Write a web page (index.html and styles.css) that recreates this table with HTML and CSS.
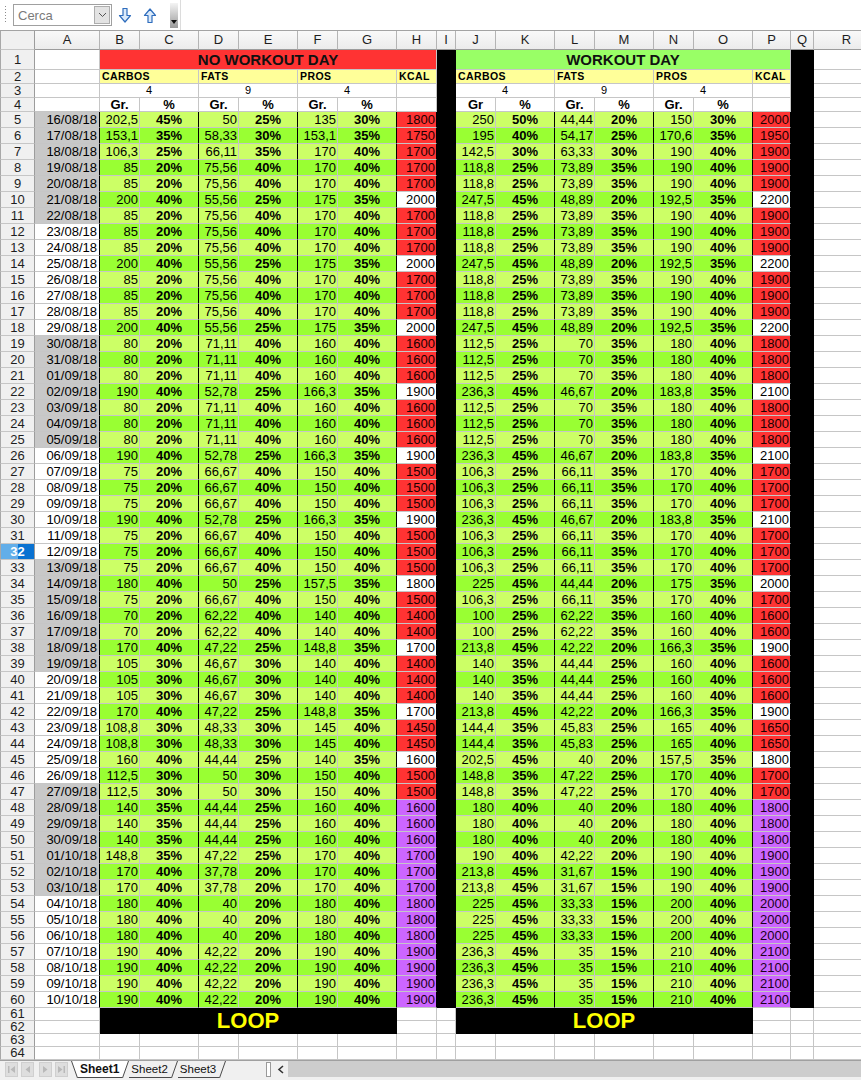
FILE: index.html
```html
<!DOCTYPE html>
<html lang="it">
<head>
<meta charset="utf-8">
<title>Sheet1</title>
<link rel="stylesheet" href="styles.css">
</head>
<body>
<div class="toolbar">
  <div class="tbgroup">
    <span class="grip"></span>
    <div class="search">
      <span class="ph">Cerca</span>
      <span class="ddbtn"><svg width="9" height="6" viewBox="0 0 9 6"><path d="M1 1 L4.5 4.5 L8 1" fill="none" stroke="#555" stroke-width="1"/></svg></span>
    </div>
    <svg class="arr" width="14" height="15" viewBox="0 0 14 15"><path d="M5 0.5 H9 V7.5 H12.5 L7 14 L1.5 7.5 H5 Z" fill="#dbeafa" stroke="#2f6dbd" stroke-width="1.2" stroke-linejoin="round"/></svg>
    <svg class="arr arr2" width="14" height="15" viewBox="0 0 14 15"><path d="M5 14.5 H9 V7.5 H12.5 L7 1 L1.5 7.5 H5 Z" fill="#dbeafa" stroke="#2f6dbd" stroke-width="1.2" stroke-linejoin="round"/></svg>
    <span class="more"><svg width="6" height="4" viewBox="0 0 6 4"><path d="M0 0 H6 L3 4 Z" fill="#111"/></svg></span>
  </div>
</div>
<div class="gridwrap">
<table class="sheet">
<colgroup>
<col class="w35"><col class="w65"><col class="w40"><col class="w59"><col class="w40"><col class="w59"><col class="w40"><col class="w59"><col class="w40"><col class="w19"><col class="w40"><col class="w59"><col class="w40"><col class="w59"><col class="w40"><col class="w59"><col class="w38"><col class="w23"><col class="w66">
</colgroup>
<tr class="ch"><th class="corner"></th><th>A</th><th>B</th><th>C</th><th>D</th><th>E</th><th>F</th><th>G</th><th>H</th><th>I</th><th>J</th><th>K</th><th>L</th><th>M</th><th>N</th><th>O</th><th>P</th><th>Q</th><th>R</th></tr>
<tr class="h1"><th>1</th><td></td><td colspan="7" class="title red">NO WORKOUT DAY</td><td class="blk"></td><td colspan="7" class="title grn">WORKOUT DAY</td><td class="blk"></td><td></td></tr>
<tr class="h2"><th>2</th><td></td><td colspan="2" class="yl">CARBOS</td><td colspan="2" class="yl">FATS</td><td colspan="2" class="yl">PROS</td><td class="yl">KCAL</td><td class="blk"></td><td colspan="2" class="yl">CARBOS</td><td colspan="2" class="yl">FATS</td><td colspan="2" class="yl">PROS</td><td class="yl">KCAL</td><td class="blk"></td><td></td></tr>
<tr class="h3"><th>3</th><td></td><td colspan="2" class="fac">4</td><td colspan="2" class="fac">9</td><td colspan="2" class="fac">4</td><td></td><td class="blk"></td><td colspan="2" class="fac">4</td><td colspan="2" class="fac">9</td><td colspan="2" class="fac">4</td><td></td><td class="blk"></td><td></td></tr>
<tr class="h4"><th>4</th><td></td><td class="gr">Gr.</td><td class="gr">%</td><td class="gr">Gr.</td><td class="gr">%</td><td class="gr">Gr.</td><td class="gr">%</td><td></td><td class="blk"></td><td class="gr">Gr</td><td class="gr">%</td><td class="gr">Gr.</td><td class="gr">%</td><td class="gr">Gr.</td><td class="gr">%</td><td></td><td class="blk"></td><td></td></tr>
<tr class="r l g"><th>5</th><td>16/08/18</td><td>202,5</td><td>45%</td><td>50</td><td>25%</td><td>135</td><td>30%</td><td>1800</td><td></td><td>250</td><td>50%</td><td>44,44</td><td>20%</td><td>150</td><td>30%</td><td>2000</td><td></td><td></td></tr>
<tr class="r b g"><th>6</th><td>17/08/18</td><td>153,1</td><td>35%</td><td>58,33</td><td>30%</td><td>153,1</td><td>35%</td><td>1750</td><td></td><td>195</td><td>40%</td><td>54,17</td><td>25%</td><td>170,6</td><td>35%</td><td>1950</td><td></td><td></td></tr>
<tr class="r l g"><th>7</th><td>18/08/18</td><td>106,3</td><td>25%</td><td>66,11</td><td>35%</td><td>170</td><td>40%</td><td>1700</td><td></td><td>142,5</td><td>30%</td><td>63,33</td><td>30%</td><td>190</td><td>40%</td><td>1900</td><td></td><td></td></tr>
<tr class="r b g"><th>8</th><td>19/08/18</td><td>85</td><td>20%</td><td>75,56</td><td>40%</td><td>170</td><td>40%</td><td>1700</td><td></td><td>118,8</td><td>25%</td><td>73,89</td><td>35%</td><td>190</td><td>40%</td><td>1900</td><td></td><td></td></tr>
<tr class="r l g"><th>9</th><td>20/08/18</td><td>85</td><td>20%</td><td>75,56</td><td>40%</td><td>170</td><td>40%</td><td>1700</td><td></td><td>118,8</td><td>25%</td><td>73,89</td><td>35%</td><td>190</td><td>40%</td><td>1900</td><td></td><td></td></tr>
<tr class="r b g w"><th>10</th><td>21/08/18</td><td>200</td><td>40%</td><td>55,56</td><td>25%</td><td>175</td><td>35%</td><td>2000</td><td></td><td>247,5</td><td>45%</td><td>48,89</td><td>20%</td><td>192,5</td><td>35%</td><td>2200</td><td></td><td></td></tr>
<tr class="r l g"><th>11</th><td>22/08/18</td><td>85</td><td>20%</td><td>75,56</td><td>40%</td><td>170</td><td>40%</td><td>1700</td><td></td><td>118,8</td><td>25%</td><td>73,89</td><td>35%</td><td>190</td><td>40%</td><td>1900</td><td></td><td></td></tr>
<tr class="r b"><th>12</th><td>23/08/18</td><td>85</td><td>20%</td><td>75,56</td><td>40%</td><td>170</td><td>40%</td><td>1700</td><td></td><td>118,8</td><td>25%</td><td>73,89</td><td>35%</td><td>190</td><td>40%</td><td>1900</td><td></td><td></td></tr>
<tr class="r l"><th>13</th><td>24/08/18</td><td>85</td><td>20%</td><td>75,56</td><td>40%</td><td>170</td><td>40%</td><td>1700</td><td></td><td>118,8</td><td>25%</td><td>73,89</td><td>35%</td><td>190</td><td>40%</td><td>1900</td><td></td><td></td></tr>
<tr class="r b w"><th>14</th><td>25/08/18</td><td>200</td><td>40%</td><td>55,56</td><td>25%</td><td>175</td><td>35%</td><td>2000</td><td></td><td>247,5</td><td>45%</td><td>48,89</td><td>20%</td><td>192,5</td><td>35%</td><td>2200</td><td></td><td></td></tr>
<tr class="r l"><th>15</th><td>26/08/18</td><td>85</td><td>20%</td><td>75,56</td><td>40%</td><td>170</td><td>40%</td><td>1700</td><td></td><td>118,8</td><td>25%</td><td>73,89</td><td>35%</td><td>190</td><td>40%</td><td>1900</td><td></td><td></td></tr>
<tr class="r b"><th>16</th><td>27/08/18</td><td>85</td><td>20%</td><td>75,56</td><td>40%</td><td>170</td><td>40%</td><td>1700</td><td></td><td>118,8</td><td>25%</td><td>73,89</td><td>35%</td><td>190</td><td>40%</td><td>1900</td><td></td><td></td></tr>
<tr class="r l"><th>17</th><td>28/08/18</td><td>85</td><td>20%</td><td>75,56</td><td>40%</td><td>170</td><td>40%</td><td>1700</td><td></td><td>118,8</td><td>25%</td><td>73,89</td><td>35%</td><td>190</td><td>40%</td><td>1900</td><td></td><td></td></tr>
<tr class="r b w"><th>18</th><td>29/08/18</td><td>200</td><td>40%</td><td>55,56</td><td>25%</td><td>175</td><td>35%</td><td>2000</td><td></td><td>247,5</td><td>45%</td><td>48,89</td><td>20%</td><td>192,5</td><td>35%</td><td>2200</td><td></td><td></td></tr>
<tr class="r l g"><th>19</th><td>30/08/18</td><td>80</td><td>20%</td><td>71,11</td><td>40%</td><td>160</td><td>40%</td><td>1600</td><td></td><td>112,5</td><td>25%</td><td>70</td><td>35%</td><td>180</td><td>40%</td><td>1800</td><td></td><td></td></tr>
<tr class="r b g"><th>20</th><td>31/08/18</td><td>80</td><td>20%</td><td>71,11</td><td>40%</td><td>160</td><td>40%</td><td>1600</td><td></td><td>112,5</td><td>25%</td><td>70</td><td>35%</td><td>180</td><td>40%</td><td>1800</td><td></td><td></td></tr>
<tr class="r l g"><th>21</th><td>01/09/18</td><td>80</td><td>20%</td><td>71,11</td><td>40%</td><td>160</td><td>40%</td><td>1600</td><td></td><td>112,5</td><td>25%</td><td>70</td><td>35%</td><td>180</td><td>40%</td><td>1800</td><td></td><td></td></tr>
<tr class="r b g w"><th>22</th><td>02/09/18</td><td>190</td><td>40%</td><td>52,78</td><td>25%</td><td>166,3</td><td>35%</td><td>1900</td><td></td><td>236,3</td><td>45%</td><td>46,67</td><td>20%</td><td>183,8</td><td>35%</td><td>2100</td><td></td><td></td></tr>
<tr class="r l g"><th>23</th><td>03/09/18</td><td>80</td><td>20%</td><td>71,11</td><td>40%</td><td>160</td><td>40%</td><td>1600</td><td></td><td>112,5</td><td>25%</td><td>70</td><td>35%</td><td>180</td><td>40%</td><td>1800</td><td></td><td></td></tr>
<tr class="r b g"><th>24</th><td>04/09/18</td><td>80</td><td>20%</td><td>71,11</td><td>40%</td><td>160</td><td>40%</td><td>1600</td><td></td><td>112,5</td><td>25%</td><td>70</td><td>35%</td><td>180</td><td>40%</td><td>1800</td><td></td><td></td></tr>
<tr class="r l g"><th>25</th><td>05/09/18</td><td>80</td><td>20%</td><td>71,11</td><td>40%</td><td>160</td><td>40%</td><td>1600</td><td></td><td>112,5</td><td>25%</td><td>70</td><td>35%</td><td>180</td><td>40%</td><td>1800</td><td></td><td></td></tr>
<tr class="r b w"><th>26</th><td>06/09/18</td><td>190</td><td>40%</td><td>52,78</td><td>25%</td><td>166,3</td><td>35%</td><td>1900</td><td></td><td>236,3</td><td>45%</td><td>46,67</td><td>20%</td><td>183,8</td><td>35%</td><td>2100</td><td></td><td></td></tr>
<tr class="r l"><th>27</th><td>07/09/18</td><td>75</td><td>20%</td><td>66,67</td><td>40%</td><td>150</td><td>40%</td><td>1500</td><td></td><td>106,3</td><td>25%</td><td>66,11</td><td>35%</td><td>170</td><td>40%</td><td>1700</td><td></td><td></td></tr>
<tr class="r b"><th>28</th><td>08/09/18</td><td>75</td><td>20%</td><td>66,67</td><td>40%</td><td>150</td><td>40%</td><td>1500</td><td></td><td>106,3</td><td>25%</td><td>66,11</td><td>35%</td><td>170</td><td>40%</td><td>1700</td><td></td><td></td></tr>
<tr class="r l"><th>29</th><td>09/09/18</td><td>75</td><td>20%</td><td>66,67</td><td>40%</td><td>150</td><td>40%</td><td>1500</td><td></td><td>106,3</td><td>25%</td><td>66,11</td><td>35%</td><td>170</td><td>40%</td><td>1700</td><td></td><td></td></tr>
<tr class="r b w"><th>30</th><td>10/09/18</td><td>190</td><td>40%</td><td>52,78</td><td>25%</td><td>166,3</td><td>35%</td><td>1900</td><td></td><td>236,3</td><td>45%</td><td>46,67</td><td>20%</td><td>183,8</td><td>35%</td><td>2100</td><td></td><td></td></tr>
<tr class="r l"><th>31</th><td>11/09/18</td><td>75</td><td>20%</td><td>66,67</td><td>40%</td><td>150</td><td>40%</td><td>1500</td><td></td><td>106,3</td><td>25%</td><td>66,11</td><td>35%</td><td>170</td><td>40%</td><td>1700</td><td></td><td></td></tr>
<tr class="r b"><th class="sel">32</th><td>12/09/18</td><td>75</td><td>20%</td><td>66,67</td><td>40%</td><td>150</td><td>40%</td><td>1500</td><td></td><td>106,3</td><td>25%</td><td>66,11</td><td>35%</td><td>170</td><td>40%</td><td>1700</td><td></td><td></td></tr>
<tr class="r l g"><th>33</th><td>13/09/18</td><td>75</td><td>20%</td><td>66,67</td><td>40%</td><td>150</td><td>40%</td><td>1500</td><td></td><td>106,3</td><td>25%</td><td>66,11</td><td>35%</td><td>170</td><td>40%</td><td>1700</td><td></td><td></td></tr>
<tr class="r b g w"><th>34</th><td>14/09/18</td><td>180</td><td>40%</td><td>50</td><td>25%</td><td>157,5</td><td>35%</td><td>1800</td><td></td><td>225</td><td>45%</td><td>44,44</td><td>20%</td><td>175</td><td>35%</td><td>2000</td><td></td><td></td></tr>
<tr class="r l g"><th>35</th><td>15/09/18</td><td>75</td><td>20%</td><td>66,67</td><td>40%</td><td>150</td><td>40%</td><td>1500</td><td></td><td>106,3</td><td>25%</td><td>66,11</td><td>35%</td><td>170</td><td>40%</td><td>1700</td><td></td><td></td></tr>
<tr class="r b g"><th>36</th><td>16/09/18</td><td>70</td><td>20%</td><td>62,22</td><td>40%</td><td>140</td><td>40%</td><td>1400</td><td></td><td>100</td><td>25%</td><td>62,22</td><td>35%</td><td>160</td><td>40%</td><td>1600</td><td></td><td></td></tr>
<tr class="r l g"><th>37</th><td>17/09/18</td><td>70</td><td>20%</td><td>62,22</td><td>40%</td><td>140</td><td>40%</td><td>1400</td><td></td><td>100</td><td>25%</td><td>62,22</td><td>35%</td><td>160</td><td>40%</td><td>1600</td><td></td><td></td></tr>
<tr class="r b g w"><th>38</th><td>18/09/18</td><td>170</td><td>40%</td><td>47,22</td><td>25%</td><td>148,8</td><td>35%</td><td>1700</td><td></td><td>213,8</td><td>45%</td><td>42,22</td><td>20%</td><td>166,3</td><td>35%</td><td>1900</td><td></td><td></td></tr>
<tr class="r l g"><th>39</th><td>19/09/18</td><td>105</td><td>30%</td><td>46,67</td><td>30%</td><td>140</td><td>40%</td><td>1400</td><td></td><td>140</td><td>35%</td><td>44,44</td><td>25%</td><td>160</td><td>40%</td><td>1600</td><td></td><td></td></tr>
<tr class="r b"><th>40</th><td>20/09/18</td><td>105</td><td>30%</td><td>46,67</td><td>30%</td><td>140</td><td>40%</td><td>1400</td><td></td><td>140</td><td>35%</td><td>44,44</td><td>25%</td><td>160</td><td>40%</td><td>1600</td><td></td><td></td></tr>
<tr class="r l"><th>41</th><td>21/09/18</td><td>105</td><td>30%</td><td>46,67</td><td>30%</td><td>140</td><td>40%</td><td>1400</td><td></td><td>140</td><td>35%</td><td>44,44</td><td>25%</td><td>160</td><td>40%</td><td>1600</td><td></td><td></td></tr>
<tr class="r b w"><th>42</th><td>22/09/18</td><td>170</td><td>40%</td><td>47,22</td><td>25%</td><td>148,8</td><td>35%</td><td>1700</td><td></td><td>213,8</td><td>45%</td><td>42,22</td><td>20%</td><td>166,3</td><td>35%</td><td>1900</td><td></td><td></td></tr>
<tr class="r l"><th>43</th><td>23/09/18</td><td>108,8</td><td>30%</td><td>48,33</td><td>30%</td><td>145</td><td>40%</td><td>1450</td><td></td><td>144,4</td><td>35%</td><td>45,83</td><td>25%</td><td>165</td><td>40%</td><td>1650</td><td></td><td></td></tr>
<tr class="r b"><th>44</th><td>24/09/18</td><td>108,8</td><td>30%</td><td>48,33</td><td>30%</td><td>145</td><td>40%</td><td>1450</td><td></td><td>144,4</td><td>35%</td><td>45,83</td><td>25%</td><td>165</td><td>40%</td><td>1650</td><td></td><td></td></tr>
<tr class="r l w"><th>45</th><td>25/09/18</td><td>160</td><td>40%</td><td>44,44</td><td>25%</td><td>140</td><td>35%</td><td>1600</td><td></td><td>202,5</td><td>45%</td><td>40</td><td>20%</td><td>157,5</td><td>35%</td><td>1800</td><td></td><td></td></tr>
<tr class="r b"><th>46</th><td>26/09/18</td><td>112,5</td><td>30%</td><td>50</td><td>30%</td><td>150</td><td>40%</td><td>1500</td><td></td><td>148,8</td><td>35%</td><td>47,22</td><td>25%</td><td>170</td><td>40%</td><td>1700</td><td></td><td></td></tr>
<tr class="r l g"><th>47</th><td>27/09/18</td><td>112,5</td><td>30%</td><td>50</td><td>30%</td><td>150</td><td>40%</td><td>1500</td><td></td><td>148,8</td><td>35%</td><td>47,22</td><td>25%</td><td>170</td><td>40%</td><td>1700</td><td></td><td></td></tr>
<tr class="r b g v"><th>48</th><td>28/09/18</td><td>140</td><td>35%</td><td>44,44</td><td>25%</td><td>160</td><td>40%</td><td>1600</td><td></td><td>180</td><td>40%</td><td>40</td><td>20%</td><td>180</td><td>40%</td><td>1800</td><td></td><td></td></tr>
<tr class="r l g v"><th>49</th><td>29/09/18</td><td>140</td><td>35%</td><td>44,44</td><td>25%</td><td>160</td><td>40%</td><td>1600</td><td></td><td>180</td><td>40%</td><td>40</td><td>20%</td><td>180</td><td>40%</td><td>1800</td><td></td><td></td></tr>
<tr class="r b g v"><th>50</th><td>30/09/18</td><td>140</td><td>35%</td><td>44,44</td><td>25%</td><td>160</td><td>40%</td><td>1600</td><td></td><td>180</td><td>40%</td><td>40</td><td>20%</td><td>180</td><td>40%</td><td>1800</td><td></td><td></td></tr>
<tr class="r l g v"><th>51</th><td>01/10/18</td><td>148,8</td><td>35%</td><td>47,22</td><td>25%</td><td>170</td><td>40%</td><td>1700</td><td></td><td>190</td><td>40%</td><td>42,22</td><td>20%</td><td>190</td><td>40%</td><td>1900</td><td></td><td></td></tr>
<tr class="r b g v"><th>52</th><td>02/10/18</td><td>170</td><td>40%</td><td>37,78</td><td>20%</td><td>170</td><td>40%</td><td>1700</td><td></td><td>213,8</td><td>45%</td><td>31,67</td><td>15%</td><td>190</td><td>40%</td><td>1900</td><td></td><td></td></tr>
<tr class="r l g v"><th>53</th><td>03/10/18</td><td>170</td><td>40%</td><td>37,78</td><td>20%</td><td>170</td><td>40%</td><td>1700</td><td></td><td>213,8</td><td>45%</td><td>31,67</td><td>15%</td><td>190</td><td>40%</td><td>1900</td><td></td><td></td></tr>
<tr class="r b v"><th>54</th><td>04/10/18</td><td>180</td><td>40%</td><td>40</td><td>20%</td><td>180</td><td>40%</td><td>1800</td><td></td><td>225</td><td>45%</td><td>33,33</td><td>15%</td><td>200</td><td>40%</td><td>2000</td><td></td><td></td></tr>
<tr class="r l v"><th>55</th><td>05/10/18</td><td>180</td><td>40%</td><td>40</td><td>20%</td><td>180</td><td>40%</td><td>1800</td><td></td><td>225</td><td>45%</td><td>33,33</td><td>15%</td><td>200</td><td>40%</td><td>2000</td><td></td><td></td></tr>
<tr class="r b v"><th>56</th><td>06/10/18</td><td>180</td><td>40%</td><td>40</td><td>20%</td><td>180</td><td>40%</td><td>1800</td><td></td><td>225</td><td>45%</td><td>33,33</td><td>15%</td><td>200</td><td>40%</td><td>2000</td><td></td><td></td></tr>
<tr class="r l v"><th>57</th><td>07/10/18</td><td>190</td><td>40%</td><td>42,22</td><td>20%</td><td>190</td><td>40%</td><td>1900</td><td></td><td>236,3</td><td>45%</td><td>35</td><td>15%</td><td>210</td><td>40%</td><td>2100</td><td></td><td></td></tr>
<tr class="r b v"><th>58</th><td>08/10/18</td><td>190</td><td>40%</td><td>42,22</td><td>20%</td><td>190</td><td>40%</td><td>1900</td><td></td><td>236,3</td><td>45%</td><td>35</td><td>15%</td><td>210</td><td>40%</td><td>2100</td><td></td><td></td></tr>
<tr class="r l v"><th>59</th><td>09/10/18</td><td>190</td><td>40%</td><td>42,22</td><td>20%</td><td>190</td><td>40%</td><td>1900</td><td></td><td>236,3</td><td>45%</td><td>35</td><td>15%</td><td>210</td><td>40%</td><td>2100</td><td></td><td></td></tr>
<tr class="r b v"><th>60</th><td>10/10/18</td><td>190</td><td>40%</td><td>42,22</td><td>20%</td><td>190</td><td>40%</td><td>1900</td><td></td><td>236,3</td><td>45%</td><td>35</td><td>15%</td><td>210</td><td>40%</td><td>2100</td><td></td><td></td></tr>
<tr class="lp"><th>61</th><td></td><td colspan="6" rowspan="2" class="loop">LOOP</td><td></td><td></td><td colspan="6" rowspan="2" class="loop">LOOP</td><td></td><td></td><td></td></tr>
<tr class="lp"><th>62</th><td></td><td></td><td></td><td></td><td></td><td></td></tr>
<tr class="lp"><th>63</th><td></td><td></td><td></td><td></td><td></td><td></td><td></td><td></td><td></td><td></td><td></td><td></td><td></td><td></td><td></td><td></td><td></td><td></td></tr>
<tr class="lp"><th>64</th><td></td><td></td><td></td><td></td><td></td><td></td><td></td><td></td><td></td><td></td><td></td><td></td><td></td><td></td><td></td><td></td><td></td><td></td></tr>
</table>
</div>
<div class="tabbar">
  <div class="nav">
    <span class="nb"><svg width="9" height="9" viewBox="0 0 9 9"><rect x="1" y="1" width="1.5" height="7" fill="#b9b9b9"/><path d="M8 1 V8 L3.5 4.5 Z" fill="#b9b9b9"/></svg></span>
    <span class="nb"><svg width="9" height="9" viewBox="0 0 9 9"><path d="M7 1 V8 L2.5 4.5 Z" fill="#b9b9b9"/></svg></span>
    <span class="nb nb3"><svg width="9" height="9" viewBox="0 0 9 9"><path d="M2 1 V8 L6.5 4.5 Z" fill="#b9b9b9"/></svg></span>
    <span class="nb"><svg width="9" height="9" viewBox="0 0 9 9"><path d="M1 1 V8 L5.5 4.5 Z" fill="#b9b9b9"/><rect x="6.5" y="1" width="1.5" height="7" fill="#b9b9b9"/></svg></span>
  </div>
  <div class="tabs">
    <svg class="sl" width="7" height="17" viewBox="0 0 7 17"><polygon points="0,0 7,0 7,17" fill="#fff"/><line x1="0.5" y1="0" x2="6.5" y2="17" stroke="#4a4a4a" stroke-width="1"/></svg>
    <span class="tab act">Sheet1</span>
    <svg class="sl" width="7" height="17" viewBox="0 0 7 17"><polygon points="0,0 7,0 0,17" fill="#fff"/><line x1="0.5" y1="17" x2="6.5" y2="0" stroke="#4a4a4a" stroke-width="1"/></svg>
    <span class="tab">Sheet2</span>
    <svg class="sl" width="7" height="17" viewBox="0 0 7 17"><line x1="0.5" y1="17" x2="6.5" y2="0" stroke="#4a4a4a" stroke-width="1"/></svg>
    <span class="tab">Sheet3</span>
    <svg class="sl" width="7" height="17" viewBox="0 0 7 17"><line x1="0.5" y1="17" x2="6.5" y2="0" stroke="#4a4a4a" stroke-width="1"/></svg>
  </div>
  <div class="split"></div>
  <div class="lbtn"><svg width="8" height="9" viewBox="0 0 8 9"><path d="M6 1 L2 4.5 L6 8" fill="none" stroke="#333" stroke-width="1.6"/></svg></div>
  <div class="track"></div>
</div>
</body>
</html>
```
FILE: styles.css
```css
html, body {
  margin: 0;
  padding: 0;
}
body {
  width: 861px;
  height: 1080px;
  overflow: hidden;
  background: #ffffff;
  font-family: "Liberation Sans", Arial, sans-serif;
  color: #000;
}

/* ---------- toolbar ---------- */
.toolbar {
  height: 30px;
  border-bottom: 1px solid #a3a3a3;
  display: flex;
  align-items: stretch;
  background: #fff;
}
.tbgroup {
  width: 180px;
  border-right: 1px solid #dcdcdc;
  display: flex;
  align-items: center;
}
.grip {
  width: 1px;
  height: 18px;
  margin-left: 5px;
  background: repeating-linear-gradient(to bottom, #8c8c8c 0 1px, transparent 1px 3px);
}
.search {
  margin-left: 7px;
  width: 99px;
  height: 22px;
  box-sizing: border-box;
  border: 1px solid #a0a0a0;
  display: flex;
  align-items: center;
  background: #fff;
}
.ph {
  flex: 1;
  font-size: 13px;
  color: #7a7a7a;
  padding-left: 4px;
}
.ddbtn {
  width: 16px;
  height: 18px;
  margin-right: 1px;
  box-sizing: border-box;
  border: 1px solid #adadad;
  background: #e3e3e3;
  display: flex;
  align-items: center;
  justify-content: center;
}
.arr {
  margin-left: 6px;
}
.arr2 {
  margin-left: 11px;
}
.more {
  margin-left: 13px;
  width: 8px;
  height: 25px;
  background: linear-gradient(to bottom, #f4f4f4, #9a9a9a);
  display: flex;
  align-items: flex-end;
  justify-content: center;
  padding-bottom: 4px;
  box-sizing: border-box;
}

/* ---------- grid ---------- */
.gridwrap {
  height: 1029px;
  overflow: hidden;
}
.sheet {
  border-collapse: separate;
  border-spacing: 0;
  table-layout: fixed;
  width: 880px;
}
.w35 { width: 35px; }
.w65 { width: 65px; }
.w40 { width: 40px; }
.w59 { width: 59px; }
.w19 { width: 19px; }
.w38 { width: 38px; }
.w23 { width: 23px; }
.w66 { width: 66px; }

.sheet td {
  border-right: 1px solid #c6c6c6;
  border-bottom: 1px solid #c6c6c6;
  padding: 0;
  font-size: 13px;
  white-space: nowrap;
  overflow: hidden;
}
.sheet th {
  font-weight: normal;
  font-size: 13px;
  color: #1e1e1e;
  padding: 0;
  text-align: center;
  white-space: nowrap;
  overflow: hidden;
}
/* column header */
.ch {
  height: 19px;
}
.ch th {
  background: linear-gradient(to bottom, #f9f9f9, #ececec);
  border-right: 1px solid #b4b4b4;
  border-bottom: 1px solid #9c9c9c;
  line-height: 18px;
}
.ch th.corner {
  background: #efefef;
  border-left: 1px solid #a8a8a8;
}
/* row headers */
.sheet tr th:first-child {
  background: #f0f0f0;
  border-left: 1px solid #a8a8a8;
  border-right: 1px solid #9c9c9c;
  border-bottom: 1px solid #c6c6c6;
}
.ch th.corner {
  border-bottom: 1px solid #9c9c9c;
}
.sheet tr th.sel {
  background: linear-gradient(to right, #62aee9 0 17px, #0a72d1 17px);
  color: #fff;
  font-weight: bold;
}

/* header rows */
.h1 { height: 20px; }
.h1 td, .h1 th { line-height: 19px; }
.h2, .h3, .h4 { height: 14px; }
.h2 td, .h2 th, .h3 td, .h3 th, .h4 td, .h4 th { line-height: 13px; }

.sheet td.title {
  font-size: 15px;
  font-weight: bold;
  text-align: center;
  color: #111;
}
.sheet td.red { background: #ff3333; }
.sheet td.grn { background: #99ff66; }
.sheet td.blk {
  background: #000;
  border-right-color: #000;
  border-bottom-color: #000;
}
.sheet td.yl {
  background: #ffff99;
  font-size: 10.5px;
  font-weight: bold;
  letter-spacing: 0.4px;
  padding-left: 2px;
  text-align: left;
}
.sheet td.fac {
  font-size: 11px;
  text-align: center;
}
.sheet td.gr {
  font-size: 13px;
  font-weight: bold;
  text-align: center;
}

/* data rows */
tr.r { height: 16px; }
tr.r th { line-height: 15px; }
tr.r td {
  line-height: 15px;
  text-align: right;
  padding-right: 1px;
}
tr.r td:nth-child(2) {
  border-right-color: #000;
  padding-right: 2px;
}
tr.g td:nth-child(2) {
  background: #c8c8c8;
}
tr.l td:nth-child(n+3):nth-child(-n+8),
tr.l td:nth-child(n+11):nth-child(-n+16) {
  background: #ccff66;
}
tr.b td:nth-child(n+3):nth-child(-n+8),
tr.b td:nth-child(n+11):nth-child(-n+16) {
  background: #99ff33;
}
tr.r td:nth-child(4),
tr.r td:nth-child(6),
tr.r td:nth-child(8),
tr.r td:nth-child(12),
tr.r td:nth-child(14),
tr.r td:nth-child(16) {
  text-align: center;
  font-weight: bold;
  padding-right: 0;
  border-right-color: #000;
}
tr.r td:nth-child(9),
tr.r td:nth-child(17) {
  background: #ff3333;
  border-right-color: #000;
  color: #1a0000;
}
tr.w td:nth-child(9),
tr.w td:nth-child(17) {
  background: #ffffff;
  color: #000;
}
tr.v td:nth-child(9),
tr.v td:nth-child(17) {
  background: #cc66ff;
  color: #1a001a;
}
tr.r td:nth-child(10),
tr.r td:nth-child(18) {
  background: #000;
  border-right-color: #000;
  border-bottom-color: #000;
}

/* loop rows */
tr.lp { height: 13px; }
tr.lp th, tr.lp td { line-height: 12px; }
.sheet td.loop {
  background: #000;
  border-right-color: #000;
  border-bottom-color: #000;
  color: #ffff00;
  font-size: 22px;
  font-weight: bold;
  text-align: center;
  line-height: 25px;
}

/* ---------- tab bar ---------- */
.tabbar {
  height: 19px;
  border-top: 1px solid #a0a0a0;
  background: #f0f0f0;
  display: flex;
  align-items: flex-start;
}
.nav {
  display: flex;
  margin-left: 5px;
  width: 66px;
  gap: 3px;
}
.nb {
  width: 13px;
  height: 15px;
  margin-top: 1px;
  box-sizing: border-box;
  border: 1px solid #cfcfcf;
  background: #dedede;
  display: flex;
  align-items: center;
  justify-content: center;
}
.nb3 {
  margin-left: 2px;
}
.tabs {
  display: flex;
  align-items: flex-start;
  height: 17px;
  margin-left: 0;
}
.sl {
  display: block;
}
.tab {
  height: 17px;
  line-height: 16px;
  font-size: 11.5px;
  color: #111;
  padding: 0 3px 0 2px;
  border-bottom: 1px solid #4a4a4a;
  box-sizing: border-box;
}
.tab.act {
  background: #fff;
  font-weight: bold;
  font-size: 12px;
  padding: 0 3px 0 2px;
}
.split {
  width: 5px;
  height: 15px;
  margin-left: 40px;
  margin-top: 1px;
  box-sizing: border-box;
  border: 1px solid #9a9a9a;
  background: #fff;
}
.lbtn {
  width: 14px;
  height: 16px;
  margin-left: 3px;
  display: flex;
  align-items: center;
  justify-content: center;
}
.track {
  flex: 1;
  height: 16px;
  background: #cdcdcd;
}
```
